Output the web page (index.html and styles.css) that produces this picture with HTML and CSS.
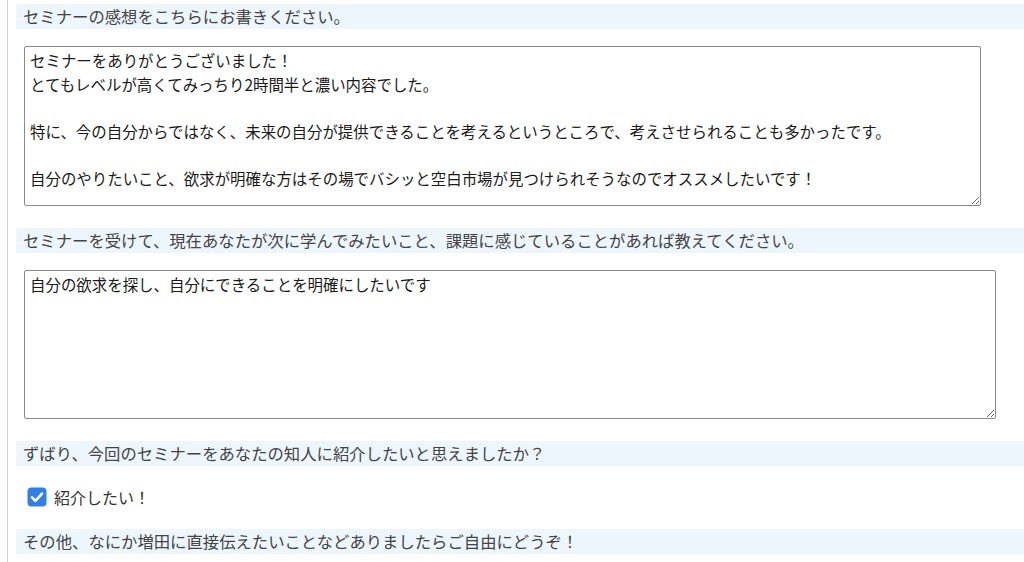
FILE: index.html
```html
<!DOCTYPE html>
<html lang="ja">
<head>
<meta charset="utf-8">
<title>セミナーアンケート</title>
<link rel="stylesheet" href="styles.css">
</head>
<body>
<div class="page">
  <section class="field">
    <h2 class="q">セミナーの感想をこちらにお書きください。</h2>
    <textarea class="answer answer-wide">セミナーをありがとうございました！
とてもレベルが高くてみっちり2時間半と濃い内容でした。

特に、今の自分からではなく、未来の自分が提供できることを考えるというところで、考えさせられることも多かったです。

自分のやりたいこと、欲求が明確な方はその場でバシッと空白市場が見つけられそうなのでオススメしたいです！</textarea>
  </section>
  <section class="field">
    <h2 class="q">セミナーを受けて、現在あなたが次に学んでみたいこと、課題に感じていることがあれば教えてください。</h2>
    <textarea class="answer answer-wider">自分の欲求を探し、自分にできることを明確にしたいです</textarea>
  </section>
  <section class="field">
    <h2 class="q">ずばり、今回のセミナーをあなたの知人に紹介したいと思えましたか？</h2>
    <label class="check">
      <span class="box"><svg viewBox="0 0 20 20" width="20" height="20"><rect x="0.5" y="0.5" width="19" height="19" rx="4" fill="#2f7fe6"/><path d="M5 10.4 L8.4 13.8 L15 6.6" fill="none" stroke="#fff" stroke-width="2.6" stroke-linecap="round" stroke-linejoin="round"/></svg></span>
      <span class="check-text">紹介したい！</span>
    </label>
  </section>
  <section class="field">
    <h2 class="q">その他、なにか増田に直接伝えたいことなどありましたらご自由にどうぞ！</h2>
  </section>
</div>
</body>
</html>
```
FILE: styles.css
```css
html, body {
  margin: 0;
  padding: 0;
  background: #ffffff;
}
body {
  font-family: "Noto Sans CJK JP", "Noto Sans", sans-serif;
  color: #333;
  overflow: hidden;
}
.page {
  margin-left: 7px;
  border-left: 1px solid #cfcfcf;
  padding: 4px 0 40px 8px;
  min-height: 600px;
  box-sizing: border-box;
}
.field {
  display: flex;
  flex-direction: column;
  margin-bottom: 22px;
}
.q {
  margin: 0;
  height: 25px;
  line-height: 25px;
  padding-left: 7px;
  font-size: 16.35px;
  font-weight: normal;
  color: #444;
  background: #eef6fd;
  white-space: nowrap;
}
.answer {
  display: block;
  margin: 17px 0 0 8px;
  box-sizing: border-box;
  border: 1px solid #8a8a8a;
  border-radius: 2px;
  padding: 2px 5px;
  font-family: "Noto Sans CJK JP", "Noto Sans", sans-serif;
  font-size: 15.45px;
  line-height: 23.5px;
  color: #1a1a1a;
  background: #fff;
  overflow: hidden;
}
.answer-wide {
  width: 957px;
  height: 160px;
}
.answer-wider {
  width: 972px;
  height: 149px;
}
.check {
  display: flex;
  align-items: center;
  gap: 7px;
  margin: 21px 0 0 11px;
  height: 20px;
}
.box {
  display: flex;
  width: 20px;
  height: 20px;
}
.check-text {
  font-size: 16px;
  color: #333;
  line-height: 20px;
}
```
